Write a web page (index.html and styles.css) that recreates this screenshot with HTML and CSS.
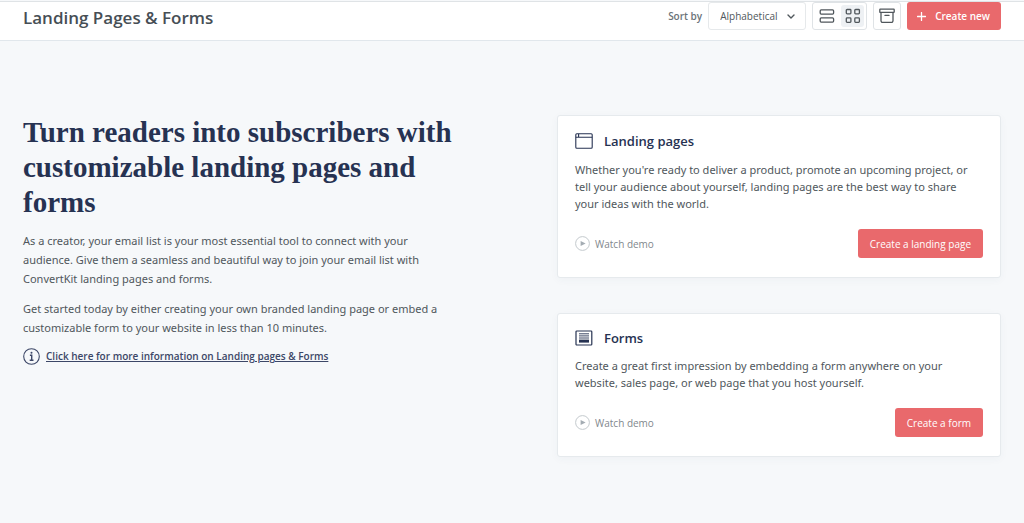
FILE: index.html
```html
<!DOCTYPE html>
<html lang="en">
<head>
<meta charset="utf-8">
<meta name="viewport" content="width=device-width, initial-scale=1">
<title>Landing Pages &amp; Forms</title>
<link rel="stylesheet" href="styles.css">
</head>
<body>
<header class="topbar">
  <h1 class="topbar-title">Landing Pages &amp; Forms</h1>
  <div class="toolbar">
    <label class="sort-label" for="sort">Sort by</label>
    <div class="select-wrap">
      <select class="sort-select" id="sort">
        <option>Alphabetical</option>
        <option>Newest</option>
      </select>
      <svg class="chevron" width="8" height="6" viewBox="0 0 8 6" aria-hidden="true"><path d="M1 1l3 3 3-3" fill="none" stroke="currentColor" stroke-width="1.4" stroke-linecap="round" stroke-linejoin="round"/></svg>
    </div>
    <div class="view-toggle">
      <button class="view-button" type="button" aria-label="List view">
        <svg width="16" height="14" viewBox="0 0 16 14" fill="none" stroke="currentColor" stroke-width="1.3"><rect x="1.2" y=".9" width="13.4" height="4.2" rx="1"/><rect x="1.2" y="8.9" width="13.4" height="4.2" rx="1"/></svg>
      </button>
      <button class="view-button view-button-active" type="button" aria-label="Grid view" aria-pressed="true">
        <svg width="16" height="16" viewBox="0 0 16 16" fill="none" stroke="currentColor" stroke-width="1.3"><rect x="1.3" y="1.5" width="4.6" height="4.4" rx=".8"/><rect x="9.8" y="1.5" width="4.6" height="4.4" rx=".8"/><rect x="1.3" y="9.9" width="4.6" height="4.4" rx=".8"/><rect x="9.8" y="9.9" width="4.6" height="4.4" rx=".8"/></svg>
      </button>
    </div>
    <button class="archive-button" type="button" aria-label="Archive">
      <svg width="16" height="16" viewBox="0 0 16 16" fill="none" stroke="currentColor" stroke-width="1.3" stroke-linecap="round" stroke-linejoin="round"><rect x=".8" y="1.2" width="14.4" height="3.2" rx=".5"/><path d="M2 4.6v8.2a1.6 1.6 0 0 0 1.6 1.6h8.8a1.6 1.6 0 0 0 1.6-1.6V4.6M6 7.4h4"/></svg>
    </button>
    <button class="button button-new" type="button">
      <svg width="9" height="9" viewBox="0 0 9 9" aria-hidden="true"><path d="M4.5 .5v8M.5 4.5h8" stroke="currentColor" stroke-width="1.3" stroke-linecap="round"/></svg>
      Create new
    </button>
  </div>
</header>
<main class="content">
  <section class="intro">
    <h2 class="intro-title">Turn readers into subscribers with customizable landing pages and forms</h2>
    <p class="intro-text">As a creator, your email list is your most essential tool to connect with your audience. Give them a seamless and beautiful way to join your email list with ConvertKit landing pages and forms.</p>
    <p class="intro-text">Get started today by either creating your own branded landing page or embed a customizable form to your website in less than 10 minutes.</p>
    <a class="info-link" href="#info">
      <svg width="17" height="17" viewBox="0 0 17 17" fill="none" stroke="currentColor" aria-hidden="true"><circle cx="8.5" cy="8.5" r="7.8" stroke-width="1.1"/><path d="M6.9 7.2h1.8v4.9M6.7 12.2h3.8" stroke-width="1.4"/><circle cx="8.5" cy="4.7" r="1" fill="currentColor" stroke="none"/></svg>
      <span class="info-link-text">Click here for more information on Landing pages &amp; Forms</span>
    </a>
  </section>
  <div class="cards">
    <article class="card">
      <h3 class="card-title">
        <svg width="18" height="20" viewBox="0 -2 18 20" fill="none" stroke="currentColor" stroke-width="1.1" aria-hidden="true"><rect x=".8" y=".8" width="16.4" height="14.4" rx="1"/><path d="M.8 4.3h16.4M3.6 1v3"/></svg>
        Landing pages
      </h3>
      <p class="card-text">Whether you're ready to deliver a product, promote an upcoming project, or tell your audience about yourself, landing pages are the best way to share your ideas with the world.</p>
      <div class="card-actions">
        <a class="demo-link" href="#landing-demo">
          <svg width="15" height="15" viewBox="0 0 15 15" aria-hidden="true"><circle cx="7.5" cy="7.5" r="6.9" fill="none" stroke="#c3c9cd"/><path d="M5.6 5.1v4.8l5-2.4z" fill="#a4acb3"/></svg>
          Watch demo
        </a>
        <button class="button" type="button">Create a landing page</button>
      </div>
    </article>
    <article class="card">
      <h3 class="card-title">
        <svg width="18" height="16" viewBox="0 0 18 16" fill="none" stroke="currentColor" aria-hidden="true"><rect x="1" y="1" width="15.8" height="14" rx=".8" stroke-width="1.2"/><path d="M4 3.8h10M4 5.9h10M4 8h10" stroke-width=".9"/><rect x="4" y="9.6" width="10" height="3" fill="currentColor" stroke="none"/></svg>
        Forms
      </h3>
      <p class="card-text">Create a great first impression by embedding a form anywhere on your website, sales page, or web page that you host yourself.</p>
      <div class="card-actions">
        <a class="demo-link" href="#form-demo">
          <svg width="15" height="15" viewBox="0 0 15 15" aria-hidden="true"><circle cx="7.5" cy="7.5" r="6.9" fill="none" stroke="#c3c9cd"/><path d="M5.6 5.1v4.8l5-2.4z" fill="#a4acb3"/></svg>
          Watch demo
        </a>
        <button class="button" type="button">Create a form</button>
      </div>
    </article>
  </div>
</main>
</body>
</html>
```

FILE: styles.css
```css
* {
  box-sizing: border-box;
}

body {
  margin: 0;
  padding-top: 1px;
  background: #f6f8fa;
  color: #50575c;
  font-family: "Open Sans", "Noto Sans", sans-serif;
  font-size: 10px;
}

h1, h2, h3, p {
  margin: 0;
}

svg {
  display: block;
  flex: none;
}

button, select {
  font: inherit;
  color: inherit;
  cursor: pointer;
}

.topbar {
  display: flex;
  justify-content: space-between;
  align-items: center;
  padding: 0 23px 10px;
  background: #fff;
  border-top: 1px solid #dfe3e6;
  border-bottom: 1px solid #e1e7ec;
}

.topbar-title {
  padding-top: 4px;
  font-size: 17px;
  line-height: 24px;
  font-weight: 600;
  color: #464e55;
}

.toolbar {
  display: flex;
  align-items: center;
}

.sort-label {
  margin-right: 6px;
  font-weight: 600;
  color: #6b7379;
}

.select-wrap {
  position: relative;
  margin-right: 6px;
}

.sort-select {
  width: 98px;
  height: 28px;
  padding: 0 24px 0 11px;
  appearance: none;
  background: #fff;
  border: 1px solid #e6e9eb;
  border-radius: 3px;
  font-weight: 500;
  color: #50575c;
}

.chevron {
  position: absolute;
  top: 12px;
  right: 11px;
  pointer-events: none;
  color: #50575c;
}

.view-toggle {
  display: flex;
  gap: 3px;
  height: 28px;
  margin-right: 6px;
  padding: 2px;
  background: #fff;
  border: 1px solid #dfe3e6;
  border-radius: 3px;
}

.view-button,
.archive-button {
  display: flex;
  align-items: center;
  justify-content: center;
  padding: 0;
  border: 0;
  background: none;
  color: #50575c;
}

.view-button {
  width: 23px;
  border-radius: 3px;
}

.view-button-active {
  background: #eef1f4;
}

.archive-button {
  width: 28px;
  height: 28px;
  margin-right: 6px;
  background: #fff;
  border: 1px solid #dfe3e6;
  border-radius: 3px;
}

.button {
  height: 29px;
  padding: 0 12px;
  background: #e9696c;
  border: 0;
  border-radius: 3px;
  color: #fff;
}

.button-new {
  display: flex;
  align-items: center;
  gap: 9px;
  height: 28px;
  padding: 0 11px 0 10px;
  font-weight: 600;
}

.content {
  display: grid;
  grid-template-columns: 1fr 1fr;
  gap: 90px;
  padding: 74px 23px 60px;
}

.intro-title {
  margin-bottom: 11px;
  font-family: "Liberation Serif", serif;
  font-size: 29px;
  line-height: 35px;
  font-weight: 700;
  color: #263252;
}

.intro-text,
.card-text {
  font-family: "Noto Sans", "Open Sans", sans-serif;
  font-size: 11px;
}

.intro-text {
  max-width: 430px;
  margin-bottom: 11px;
  line-height: 19px;
}

.info-link {
  display: flex;
  align-items: center;
  gap: 6px;
  color: #3c4767;
  line-height: 17px;
  font-weight: 600;
  text-decoration: none;
}

.info-link-text {
  text-decoration: underline;
}

.cards {
  display: grid;
  align-content: start;
  gap: 35px;
}

.card {
  padding: 15px 17px 19px;
  background: #fff;
  border: 1px solid #e6eaed;
  border-radius: 3px;
  box-shadow: 0 2px 8px rgba(60, 80, 100, 0.04);
}

.card-title {
  display: flex;
  align-items: center;
  gap: 11px;
  margin-bottom: 10px;
  font-size: 13px;
  line-height: 18px;
  font-weight: 600;
  color: #263252;
}

.card-text {
  max-width: 400px;
  line-height: 17px;
}

.card-actions {
  display: flex;
  justify-content: space-between;
  align-items: center;
  margin-top: 17px;
}

.demo-link {
  display: flex;
  align-items: center;
  gap: 5px;
  color: #7f878d;
  text-decoration: none;
}
```
